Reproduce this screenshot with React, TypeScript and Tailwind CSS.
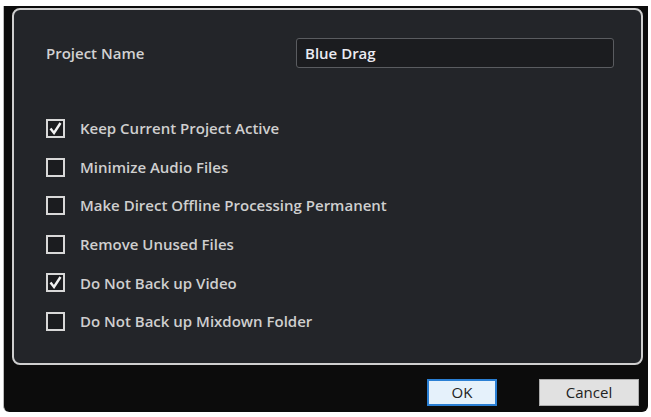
const options = [
  { label: 'Keep Current Project Active', checked: true },
  { label: 'Minimize Audio Files', checked: false },
  { label: 'Make Direct Offline Processing Permanent', checked: false },
  { label: 'Remove Unused Files', checked: false },
  { label: 'Do Not Back up Video', checked: true },
  { label: 'Do Not Back up Mixdown Folder', checked: false },
]

function Box({ checked }: { checked: boolean }) {
  return (
    <span className="w-[19px] h-[19px] border-2 border-[#d8d8d8] bg-[#1b1c1f] flex items-center justify-center shrink-0">
      {checked && (
        <svg width="13" height="13" viewBox="0 0 13 13">
          <path d="M1.5 6.5 L5 11 L11.5 1" fill="none" stroke="#f2f2f2" strokeWidth="2.4" />
        </svg>
      )}
    </span>
  )
}

export default function App() {
  return (
    <div className="w-[651px] h-[417px] bg-white pt-[6px] pl-[3px] pr-[3px] pb-[5px]" style={{ fontFamily: '"Open Sans", "Noto Sans", sans-serif' }}>
      <div className="h-full bg-[#0c0c0c] rounded-b-[6px] border-l border-[#bbb] flex flex-col pl-[8px] pr-[5px] pt-[2px]">
        <div className="h-[357px] bg-[#232529] border-2 border-[#cfcfcf] rounded-[8px] pl-[32px] pr-[27px] pt-[28px]">
          <div className="flex items-center h-[30px]">
            <span className="w-[250px] text-[15px] text-[#d2d2d2] font-semibold">Project Name</span>
            <div className="flex-1 h-[30px] bg-[#1b1c1f] border border-[#5a5c60] rounded-[3px] flex items-center px-[8px] text-[15px] font-semibold text-[#ebebf2]">
              Blue Drag
            </div>
          </div>
          <div className="mt-[51px] flex flex-col gap-[19.6px]">
            {options.map(o => (
              <div key={o.label} className="flex items-center gap-[15px] h-[19px]">
                <Box checked={o.checked} />
                <span className="text-[15px] text-[#cfcfcf] font-semibold">{o.label}</span>
              </div>
            ))}
          </div>
        </div>
        <div className="flex justify-end gap-[42px] pt-[14px] pr-[4px]">
          <button className="w-[70px] h-[27px] bg-[#e5f1fb] border-2 border-[#2a7fd4] text-[15px] text-[#222]">OK</button>
          <button className="w-[100px] h-[27px] bg-[#e1e1e1] border border-[#adadad] text-[15px] text-[#222]">Cancel</button>
        </div>
      </div>
    </div>
  )
}
